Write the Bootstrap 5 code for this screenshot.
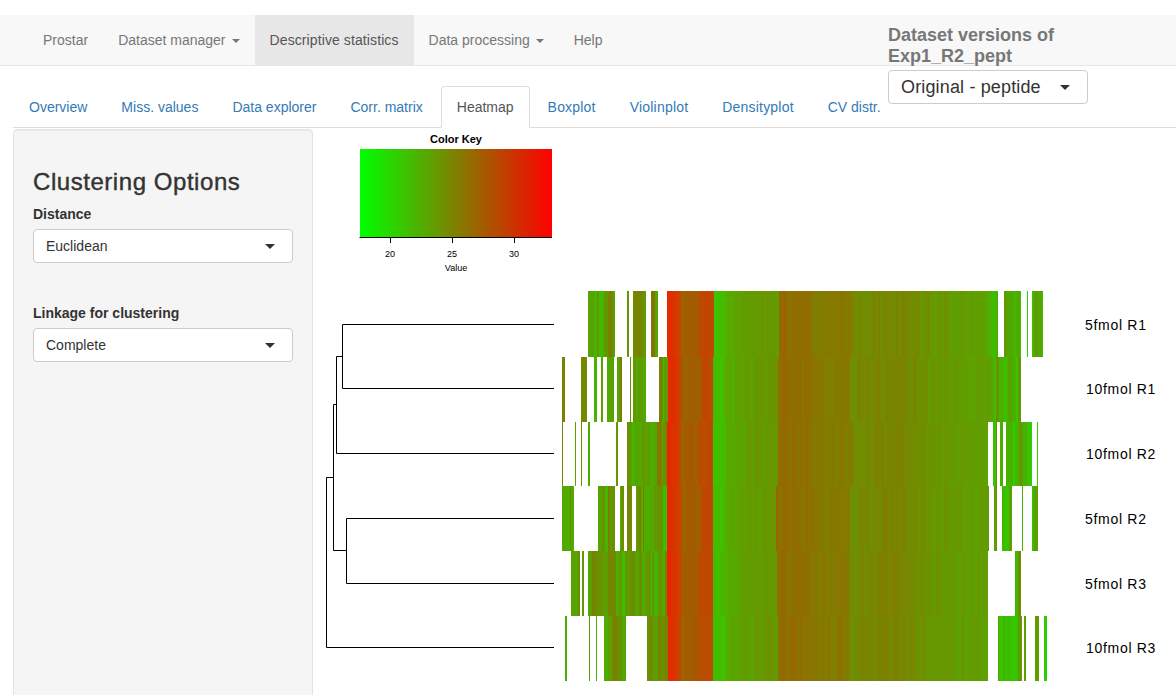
<!DOCTYPE html>
<html lang="en">
<head>
<meta charset="utf-8">
<title>Prostar</title>
<link href="https://cdn.jsdelivr.net/npm/bootstrap@5.3.0/dist/css/bootstrap.min.css" rel="stylesheet">
<style>
html,body{height:695px;overflow:hidden;}
body{font-family:"Liberation Sans",Arial,sans-serif;font-size:14px;line-height:20px;color:#333;background:#fff;padding-top:15px;}
.top-bar{height:51px;background:#f8f8f8;border-bottom:1px solid #e7e7e7;padding:0 0 0 28px;flex-wrap:nowrap;align-items:flex-start;}
.top-bar.navbar-expand .navbar-nav .nav-link{color:#777;padding:15px;line-height:20px;height:50px;font-size:14px;}
.top-bar .nav-link.dropdown-toggle::after{border-top:4px solid #777;border-left:4px solid transparent;border-right:4px solid transparent;border-bottom:0;margin-left:6px;vertical-align:2px;}
.top-bar.navbar-expand .navbar-nav .nav-link.on{background:#e7e7e7;color:#555;letter-spacing:.1px;}
.ver-box{position:absolute;left:888px;top:10px;width:200px;}
.ver-title{font-weight:700;font-size:18px;line-height:21px;color:#777;width:190px;margin-bottom:3px;}
.pick{display:flex;align-items:center;justify-content:space-between;width:100%;height:34px;background:#fff;border:1px solid #ccc;border-radius:4px;padding:0 12px;color:#333;font-size:14px;line-height:20px;text-align:left;}
.pick:hover,.pick:active{background:#fff;border-color:#ccc;color:#333;}
.pick.dropdown-toggle::after{border-top:5px solid #333;border-left:5px solid transparent;border-right:5px solid transparent;border-bottom:0;margin:0 5px 0 0;}
.pick-lg{font-size:18px;letter-spacing:.15px;}
.tab-strip{margin:20px 0 0 13px;height:42px;border-bottom:1px solid #ddd;flex-wrap:nowrap;}
.tab-strip .nav-link{color:#337ab7;padding:10px 15px;line-height:20px;height:42px;margin-right:2px;border-radius:4px 4px 0 0;font-size:14px;white-space:nowrap;}
.tab-strip .nav-link.active{color:#555;background:#fff;border-color:#ddd #ddd #fff;}
.tab-strip .tab-loose{letter-spacing:.2px;}
.work-area{height:568px;overflow:hidden;}
.side-well{margin:1px 0 0 13px;width:300px;height:600px;flex:none;background:#f5f5f5;border:1px solid #e3e3e3;border-radius:4px;padding:39px 19px 0;box-shadow:inset 0 1px 1px rgba(0,0,0,.05);}
.side-title{font-size:24px;font-weight:500;line-height:26px;margin:0 0 9px;color:#333;letter-spacing:.55px;-webkit-text-stroke:.4px #333;}
.field-label{display:block;font-weight:700;margin-bottom:5px;font-size:14px;}
.field-gap{margin-bottom:40px;}
.plot-svg{display:block;flex:none;width:856px;height:568px;margin-left:7px;}
.plot-svg text{font-family:"Liberation Sans",Arial,sans-serif;fill:#000;}
.row-name{font-size:14px;letter-spacing:.7px;}
.key-title{font-size:11px;font-weight:700;}
.key-tick{font-size:9px;}
</style>
</head>
<body>
<nav class="navbar navbar-expand top-bar">
  <ul class="navbar-nav">
    <li class="nav-item"><a class="nav-link" href="#">Prostar</a></li>
    <li class="nav-item"><a class="nav-link dropdown-toggle" href="#">Dataset manager</a></li>
    <li class="nav-item"><a class="nav-link on" href="#">Descriptive statistics</a></li>
    <li class="nav-item"><a class="nav-link dropdown-toggle" href="#">Data processing</a></li>
    <li class="nav-item"><a class="nav-link" href="#">Help</a></li>
  </ul>
  <div class="ver-box">
    <div class="ver-title">Dataset versions of Exp1_R2_pept</div>
    <button type="button" class="btn pick pick-lg dropdown-toggle">Original - peptide</button>
  </div>
</nav>
<ul class="nav nav-tabs tab-strip">
  <li class="nav-item"><a class="nav-link" href="#">Overview</a></li>
  <li class="nav-item"><a class="nav-link" href="#">Miss. values</a></li>
  <li class="nav-item"><a class="nav-link" href="#">Data explorer</a></li>
  <li class="nav-item"><a class="nav-link" href="#">Corr. matrix</a></li>
  <li class="nav-item"><a class="nav-link active" href="#">Heatmap</a></li>
  <li class="nav-item"><a class="nav-link tab-loose" href="#">Boxplot</a></li>
  <li class="nav-item"><a class="nav-link tab-loose" href="#">Violinplot</a></li>
  <li class="nav-item"><a class="nav-link tab-loose" href="#">Densityplot</a></li>
  <li class="nav-item"><a class="nav-link" href="#">CV distr.</a></li>
</ul>
<div class="d-flex work-area">
  <aside class="side-well">
    <h3 class="side-title">Clustering Options</h3>
    <div class="field-gap">
      <label class="field-label">Distance</label>
      <button type="button" class="btn pick dropdown-toggle">Euclidean</button>
    </div>
    <div>
      <label class="field-label">Linkage for clustering</label>
      <button type="button" class="btn pick dropdown-toggle">Complete</button>
    </div>
  </aside>
  <svg class="plot-svg" viewBox="320 128 856 568" xmlns="http://www.w3.org/2000/svg">
    <defs>
      <linearGradient id="keyGrad" x1="0" x2="1" y1="0" y2="0">
        <stop offset="0" stop-color="#00ff00"/>
        <stop offset="1" stop-color="#ff0000"/>
      </linearGradient>
    </defs>
    <text class="key-title" x="456" y="143" text-anchor="middle">Color Key</text>
    <rect x="360" y="149" width="192" height="88" fill="url(#keyGrad)"/>
    <g stroke="#000" stroke-width="1" fill="none">
      <path d="M359.5 237.5H552"/>
      <path d="M390.5 237.5V243M452.5 237.5V243M514.5 237.5V243"/>
    </g>
    <text class="key-tick" x="390" y="257" text-anchor="middle">20</text>
    <text class="key-tick" x="452" y="257" text-anchor="middle">25</text>
    <text class="key-tick" x="514" y="257" text-anchor="middle">30</text>
    <text class="key-tick" x="456" y="271" text-anchor="middle">Value</text>

    <g stroke="#000" stroke-width="1" fill="none">
      <path d="M554 324.5H342.5V388.5H554"/>
      <path d="M342.5 356.5H336.5"/>
      <path d="M336.5 356.5V453.5H554"/>
      <path d="M336.5 404.5H333.5"/>
      <path d="M554 518.5H346.5V583.5H554"/>
      <path d="M346.5 550.5H333.5"/>
      <path d="M333.5 404.5V550.5"/>
      <path d="M333.5 477.5H326.5V647.5H554"/>
    </g>

    <g id="heat" shape-rendering="crispEdges"></g>

    <text class="row-name" x="1085" y="330">5fmol R1</text>
    <text class="row-name" x="1086" y="394">10fmol R1</text>
    <text class="row-name" x="1086" y="459">10fmol R2</text>
    <text class="row-name" x="1085" y="524">5fmol R2</text>
    <text class="row-name" x="1085" y="589">5fmol R3</text>
    <text class="row-name" x="1086" y="653">10fmol R3</text>
  </svg>
</div>
<script>
(function(){
  var rows=[
    {y:[291,357],on:[[588,615],[627,629],[633,646],[651,658],[667,998],[1004,1021],[1027,1028],[1032,1043]]},
    {y:[357,422],on:[[562,565],[581,587],[594,597],[601,603],[607,614],[617,622],[630,631],[633,646],[659,1021]]},
    {y:[422,486],on:[[562,563],[575,576],[581,582],[588,590],[616,618],[627,988],[993,997],[1000,1003],[1006,1032],[1037,1038]]},
    {y:[486,551],on:[[562,574],[598,615],[620,624],[627,632],[636,989],[994,997],[1002,1012],[1022,1023],[1032,1038]]},
    {y:[551,616],on:[[571,580],[582,584],[588,988],[1015,1021]]},
    {y:[616,681],on:[[565,567],[589,590],[596,597],[604,626],[647,988],[998,1022],[1024,1026],[1035,1039],[1044,1047]]}
  ];
  var stops=[[562,90,160],[600,94,156],[640,98,152],[665,100,150],[666,232,38],[672,222,48],[680,196,70],[681,160,95],[697,164,90],[698,190,72],[712,190,72],[713,62,192],[722,66,190],[726,86,170],[740,94,160],[775,104,150],[776,146,108],[809,144,110],[810,134,120],[849,132,122],[850,112,142],[870,118,136],[900,122,132],[928,108,146],[960,98,156],[988,92,162],[1000,70,180],[1047,80,170]];
  function base(x){
    for(var i=0;i<stops.length-1;i++){
      if(x>=stops[i][0]&&x<stops[i+1][0]){
        var t=(x-stops[i][0])/(stops[i+1][0]-stops[i][0]);
        return [stops[i][1]+t*(stops[i+1][1]-stops[i][1]),stops[i][2]+t*(stops[i+1][2]-stops[i][2])];
      }
    }
    return [80,170];
  }
  var seed=12345;
  function rnd(){seed=(seed*1103515245+12345)&0x7fffffff;return seed/0x7fffffff;}
  var colNoise={};
  for(var x=540;x<1060;x++){colNoise[x]=(rnd()-.5);}
  var g=document.getElementById('heat'),ns='http://www.w3.org/2000/svg';
  rows.forEach(function(r){
    r.on.forEach(function(seg){
      var x=seg[0];
      while(x<seg[1]){
        var w=Math.min(1+Math.floor(rnd()*4),seg[1]-x);
        var c=base(x),amp=(x<666||x>=988)?70:(x<713?12:16);
        var n=(colNoise[x]*.6+(rnd()-.5)*.6)*amp;
        var red=Math.max(0,Math.min(255,Math.round(c[0]+n)));
        var grn=Math.max(0,Math.min(255,Math.round(c[1]-n)));
        var e=document.createElementNS(ns,'rect');
        e.setAttribute('x',x);e.setAttribute('y',r.y[0]);
        e.setAttribute('width',w);e.setAttribute('height',r.y[1]-r.y[0]);
        e.setAttribute('fill','rgb('+red+','+grn+',0)');
        g.appendChild(e);
        x+=w;
      }
    });
  });
})();
</script>
<script src="https://cdn.jsdelivr.net/npm/bootstrap@5.3.0/dist/js/bootstrap.bundle.min.js"></script>
</body>
</html>
